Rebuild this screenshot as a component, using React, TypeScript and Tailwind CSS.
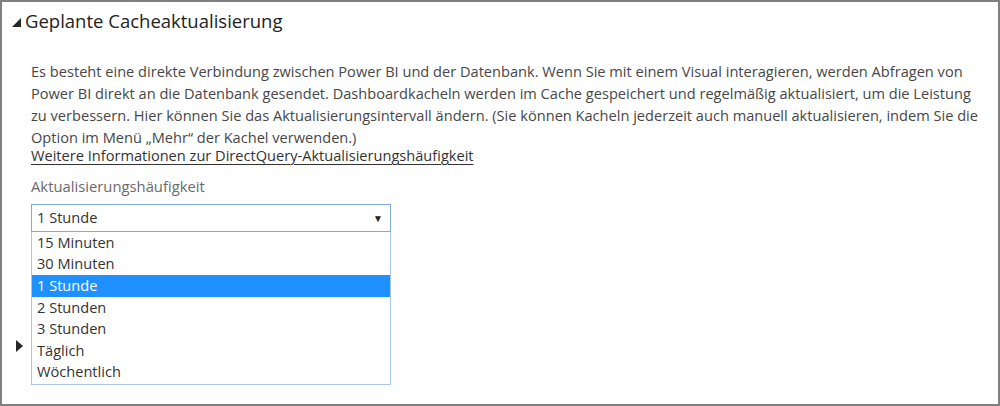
import React from "react";

const options = ["15 Minuten", "30 Minuten", "1 Stunde", "2 Stunden", "3 Stunden", "Täglich", "Wöchentlich"];

const lines = [
  "Es besteht eine direkte Verbindung zwischen Power BI und der Datenbank. Wenn Sie mit einem Visual interagieren, werden Abfragen von",
  "Power BI direkt an die Datenbank gesendet. Dashboardkacheln werden im Cache gespeichert und regelmäßig aktualisiert, um die Leistung",
  "zu verbessern. Hier können Sie das Aktualisierungsintervall ändern. (Sie können Kacheln jederzeit auch manuell aktualisieren, indem Sie die",
  "Option im Menü „Mehr“ der Kachel verwenden.)",
];

export default function App() {
  return (
    <div className="w-[1000px] h-[406px] border-2 border-[#808080] bg-white overflow-hidden font-['Open_Sans',sans-serif] text-[#444]">
      <div className="flex items-center h-[36px] pt-[2px] pl-[10px]">
        <svg width="9" height="9" viewBox="0 0 9 9" className="mr-[4px] mt-[2px]">
          <polygon points="9,0 9,9 0,9" fill="#262626" />
        </svg>
        <span className="text-[18.5px] text-[#222] leading-none">Geplante Cacheaktualisierung</span>
      </div>
      <div className="pl-[29px] pr-[10px] pt-[22px]">
        <p className="text-[14.6px] leading-[22px] text-[#474747]">
          {lines.map((l) => (
            <span key={l} className="block whitespace-nowrap">
              {l}
            </span>
          ))}
        </p>
        <div className="-mt-[2px] text-[14.6px] leading-[18px] text-[#333] underline underline-offset-[3px] w-fit">
          Weitere Informationen zur DirectQuery-Aktualisierungshäufigkeit
        </div>
        <div className="mt-[12px] text-[14.8px] leading-[20px] text-[#6a6a6a]">Aktualisierungshäufigkeit</div>
        <div className="relative mt-[8px] w-[360px]">
          <div className="h-[28px] border border-[#7eaae6] flex items-center justify-between pl-[5px] pr-[7px] text-[14.6px] text-[#333]">
            <span>1 Stunde</span>
            <span className="text-[10px] text-[#222]">▼</span>
          </div>
          <div className="absolute left-0 top-[28px] w-[360px] border border-t-0 border-[#a9c4e8] bg-white z-10 pb-[1px]">
            {options.map((o) => (
              <div
                key={o}
                className={
                  "h-[21.6px] flex items-center pl-[5px] text-[14.6px] " +
                  (o === "1 Stunde" ? "bg-[#1e90ff] text-white" : "text-[#333]")
                }
              >
                {o}
              </div>
            ))}
          </div>
        </div>
      </div>
      <div className="pl-[14px] mt-[108px]">
        <svg width="7" height="12" viewBox="0 0 7 12">
          <polygon points="0,0 7,6 0,12" fill="#262626" />
        </svg>
      </div>
    </div>
  );
}
